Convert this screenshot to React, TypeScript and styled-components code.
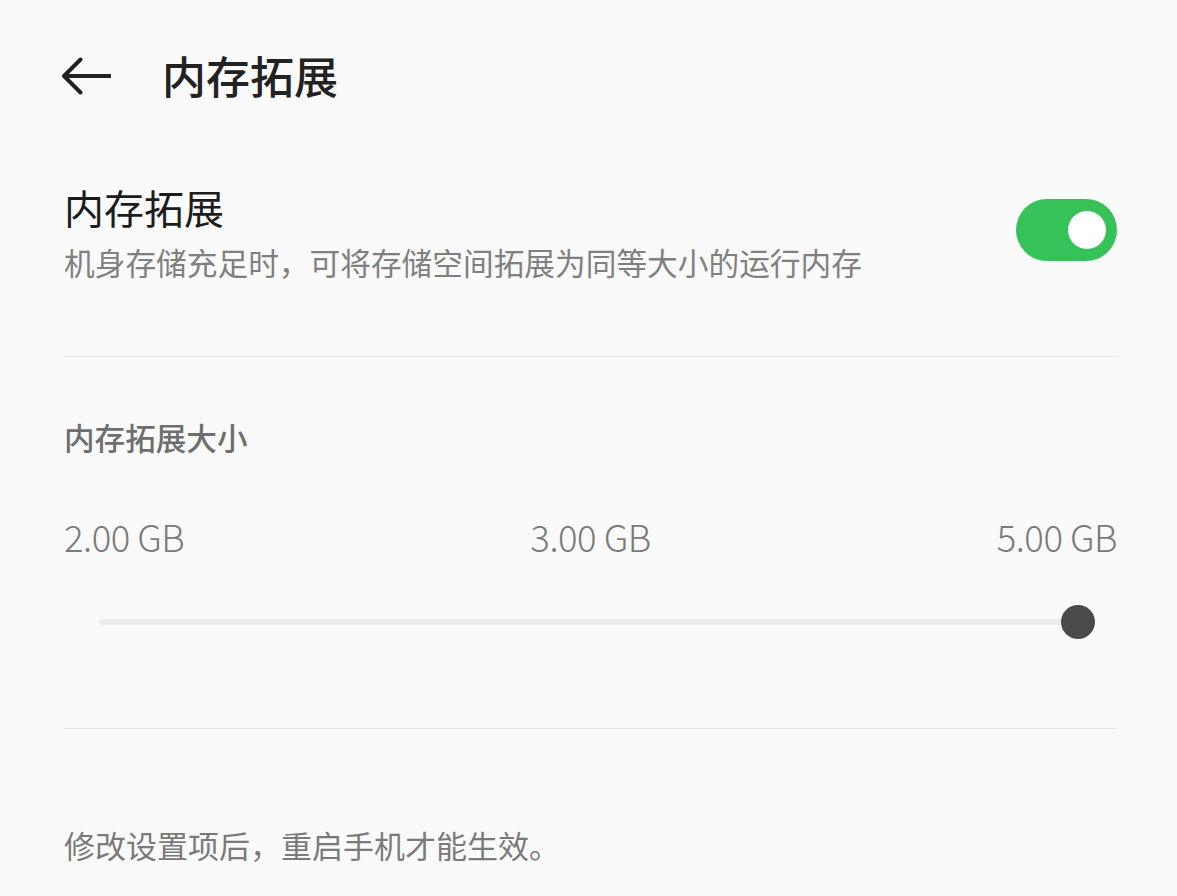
import React from "react";
import styled, { createGlobalStyle } from "styled-components";

const Global = createGlobalStyle`
  html, body { margin: 0; padding: 0; background: #fafafa; }
  body { font-family: "Noto Sans CJK SC", "Noto Sans", sans-serif; }
`;

const Page = styled.div`
  width: 1177px;
  height: 896px;
  background: #fafafa;
  overflow: hidden;
  box-sizing: border-box;
`;

const Header = styled.header`
  height: 152px;
  box-sizing: border-box;
  padding: 0 0 3px 61px;
  display: flex;
  align-items: center;
`;

const BackButton = styled.button`
  border: none;
  background: none;
  padding: 0;
  width: 50px;
  height: 40px;
  display: flex;
  margin-right: 51px;
  margin-top: 3px;
  color: #222;
`;

const HeaderTitle = styled.h1`
  margin: 0;
  font-size: 44px;
  font-weight: 500;
  color: #222;
  line-height: 56px;
`;

const Content = styled.main`
  padding: 0 60px 0 64px;
`;

const SwitchRow = styled.section`
  display: flex;
  justify-content: space-between;
  align-items: flex-start;
  padding-top: 29px;
  padding-bottom: 72px;
`;

const TextBlock = styled.div`
  display: flex;
  flex-direction: column;
`;

const ItemTitle = styled.div`
  font-size: 40px;
  line-height: 52px;
  color: #1c1c1c;
`;

const ItemDesc = styled.div`
  margin-top: 7px;
  font-size: 30.7px;
  line-height: 44px;
  color: #808080;
`;

const Toggle = styled.div<{ $on: boolean }>`
  margin-top: 18px;
  width: 101px;
  height: 62px;
  border-radius: 31px;
  background: ${(p) => (p.$on ? "#37c159" : "#ccc")};
  display: flex;
  align-items: center;
  justify-content: ${(p) => (p.$on ? "flex-end" : "flex-start")};
  padding: 0 11px;
  box-sizing: border-box;
`;

const Knob = styled.div`
  width: 38px;
  height: 38px;
  border-radius: 50%;
  background: #fff;
`;

const Divider = styled.hr`
  margin: 0;
  border: none;
  height: 1px;
  background: #e4e4e4;
`;

const SizeSection = styled.section`
  padding-top: 60px;
  padding-bottom: 76px;
`;

const SubLabel = styled.div`
  font-size: 30.6px;
  line-height: 40px;
  font-weight: 500;
  color: #6e6e6e;
`;

const Scale = styled.div`
  margin-top: 56px;
  display: flex;
  justify-content: space-between;
`;

const ScaleValue = styled.span`
  font-family: "Noto Sans CJK SC", "Noto Sans", sans-serif;
  font-size: 36.5px;
  line-height: 48px;
  color: #7a7a7a;
  font-weight: 300;
  letter-spacing: -0.5px;
`;

const SliderWrap = styled.div`
  margin: 31px 39px 0 35px;
  height: 60px;
  display: flex;
  align-items: center;
`;

const Track = styled.div`
  position: relative;
  flex: 1;
  height: 6px;
  border-radius: 3px;
  background: #ebebeb;
`;

const Thumb = styled.div`
  position: absolute;
  top: 50%;
  width: 34px;
  height: 34px;
  margin-top: -17px;
  margin-left: -17px;
  border-radius: 50%;
  background: #4a4a4a;
`;

const Footer = styled.div`
  padding-top: 96px;
  font-size: 31px;
  line-height: 40px;
  color: #7a7a7a;
`;

export default function App() {
  const value = 5;
  const min = 2;
  const max = 5;
  const pct = ((value - min) / (max - min)) * 100;
  return (
    <Page>
      <Global />
      <Header>
        <BackButton aria-label="返回">
          <svg width="50" height="40" viewBox="0 0 50 40" fill="none">
            <path
              d="M3 20 H49 M19.5 3.5 L3 20 L19.5 36.5"
              stroke="#222"
              strokeWidth="4"
              strokeLinecap="round"
              strokeLinejoin="round"
            />
          </svg>
        </BackButton>
        <HeaderTitle>内存拓展</HeaderTitle>
      </Header>
      <Content>
        <SwitchRow>
          <TextBlock>
            <ItemTitle>内存拓展</ItemTitle>
            <ItemDesc>机身存储充足时，可将存储空间拓展为同等大小的运行内存</ItemDesc>
          </TextBlock>
          <Toggle $on>
            <Knob />
          </Toggle>
        </SwitchRow>
        <Divider />
        <SizeSection>
          <SubLabel>内存拓展大小</SubLabel>
          <Scale>
            <ScaleValue>2.00 GB</ScaleValue>
            <ScaleValue>3.00 GB</ScaleValue>
            <ScaleValue>5.00 GB</ScaleValue>
          </Scale>
          <SliderWrap>
            <Track>
              <Thumb style={{ left: `${pct}%` }} />
            </Track>
          </SliderWrap>
        </SizeSection>
        <Divider />
        <Footer>修改设置项后，重启手机才能生效。</Footer>
      </Content>
    </Page>
  );
}
